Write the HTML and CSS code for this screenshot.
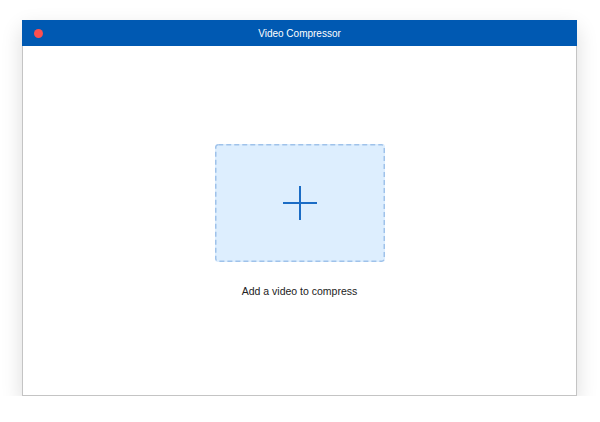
FILE: index.html
```html
<!DOCTYPE html>
<html lang="en">
<head>
    <meta charset="UTF-8">
    <meta name="viewport" content="width=device-width, initial-scale=1.0">
    <title>Video Compressor</title>
    <link rel="stylesheet" href="styles.css">
</head>
<body>
    <div class="window">
        <div class="titlebar">
            <span class="close-dot"></span>
            <span class="title">Video Compressor</span>
        </div>
        <div class="content">
            <div class="dropzone">
                <svg width="36" height="36" viewBox="0 0 36 36">
                    <path d="M18 1 V35 M1 18 H35" stroke="#1b6cc5" stroke-width="2" fill="none"/>
                </svg>
            </div>
            <p class="hint">Add a video to compress</p>
        </div>
    </div>
</body>
</html>
```

FILE: styles.css
```css
body {
    margin: 0;
    padding: 20px 0 0 22px;
    background: #ffffff;
    font-family: "Liberation Sans", Arial, sans-serif;
}
.window {
    width: 553px;
    height: 374px;
    border: 1px solid #c4c4c4;
    background: #ffffff;
    box-shadow: 0 8px 20px rgba(0,0,0,0.14);
    display: flex;
    flex-direction: column;
}
.titlebar {
    height: 26px;
    background: #0059b2;
    position: relative;
    display: flex;
    align-items: center;
    justify-content: center;
    margin: -1px -1px 0 -1px;
}
.close-dot {
    position: absolute;
    left: 12px;
    top: 9px;
    width: 9px;
    height: 9px;
    border-radius: 50%;
    background: #fc4f4f;
}
.title {
    color: #ffffff;
    font-size: 10px;
}
.content {
    flex: 1;
    display: flex;
    flex-direction: column;
    align-items: center;
    justify-content: center;
}
.dropzone {
    width: 170px;
    height: 118px;
    border-radius: 3px;
    background-color: #ddeefe;
    background-image: url("data:image/svg+xml,%3Csvg xmlns='http://www.w3.org/2000/svg' width='170' height='118'%3E%3Crect x='0.75' y='0.75' width='168.5' height='116.5' rx='2.5' fill='none' stroke='%239fc2ea' stroke-width='1.5' stroke-dasharray='5 3'/%3E%3C/svg%3E");
    display: flex;
    align-items: center;
    justify-content: center;
}
.hint {
    margin: 23px 0 0 0;
    font-size: 10.5px;
    color: #222222;
}
```
